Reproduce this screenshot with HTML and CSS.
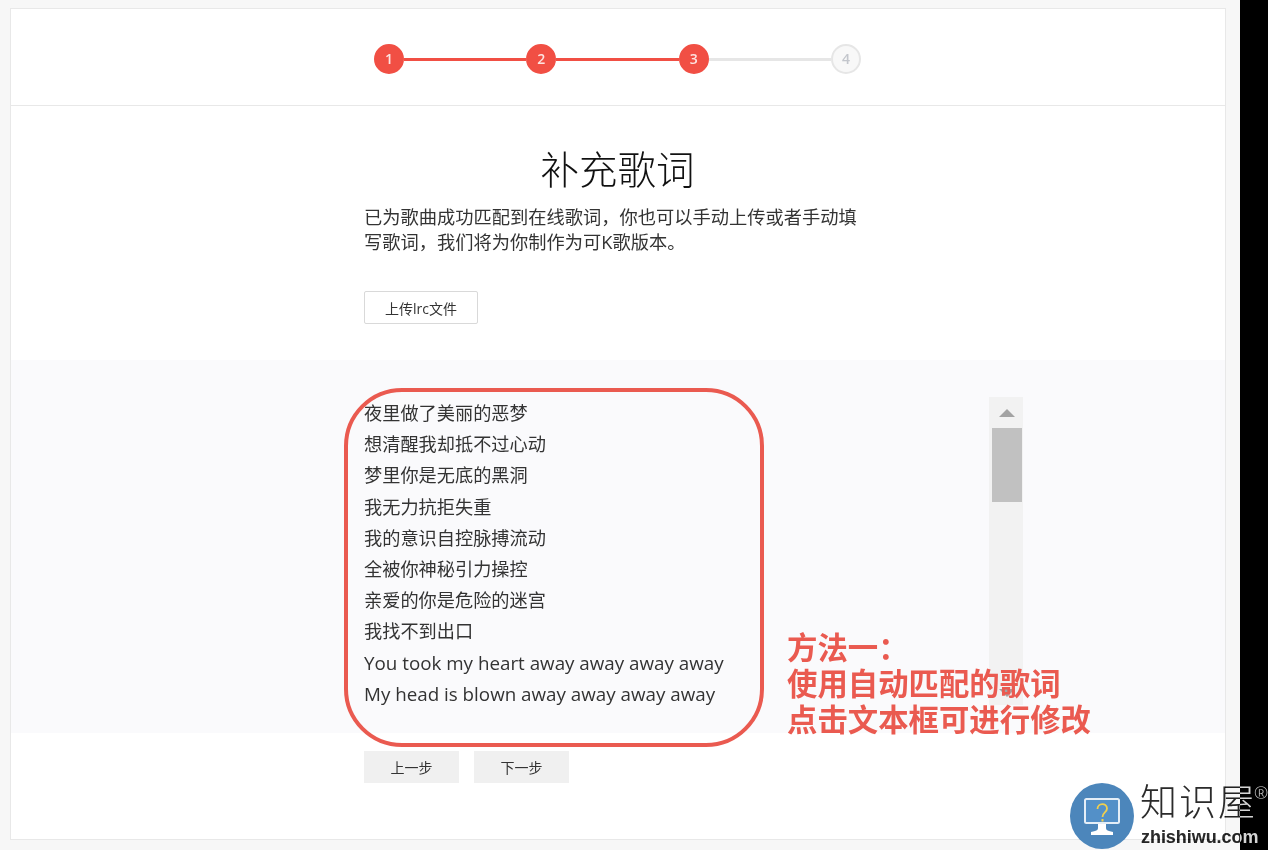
FILE: index.html
```html
<!DOCTYPE html>
<html lang="zh-CN">
<head>
    <meta charset="UTF-8">
    <meta name="viewport" content="width=device-width, initial-scale=1.0">
    <title>补充歌词</title>
    <link rel="stylesheet" href="styles.css">
</head>
<body>

    <div class="page">
        <div class="card">

            <!-- Step indicator -->
            <div class="steps-bar">
                <div class="steps">
                    <span class="dot done">1</span>
                    <span class="link done"></span>
                    <span class="dot done">2</span>
                    <span class="link done"></span>
                    <span class="dot done">3</span>
                    <span class="link"></span>
                    <span class="dot">4</span>
                </div>
            </div>

            <!-- Intro -->
            <div class="intro">
                <h1>补充歌词</h1>
                <p>已为歌曲成功匹配到在线歌词，你也可以手动上传或者手动填写歌词，我们将为你制作为可K歌版本。</p>
                <button class="upload-btn">上传lrc文件</button>
            </div>

            <!-- Lyrics editor -->
            <div class="lyrics-panel">
                <div class="lyrics">
                    <div>夜里做了美丽的恶梦</div>
                    <div>想清醒我却抵不过心动</div>
                    <div>梦里你是无底的黑洞</div>
                    <div>我无力抗拒失重</div>
                    <div>我的意识自控脉搏流动</div>
                    <div>全被你神秘引力操控</div>
                    <div>亲爱的你是危险的迷宫</div>
                    <div>我找不到出口</div>
                    <div class="latin">You took my heart away away away away</div>
                    <div class="latin">My head is blown away away away away</div>
                </div>
                <div class="scrollbar">
                    <div class="scroll-up"></div>
                    <div class="scroll-thumb"></div>
                    <div class="scroll-down"></div>
                </div>
            </div>

            <!-- Footer buttons -->
            <div class="actions">
                <button class="step-btn">上一步</button>
                <button class="step-btn">下一步</button>
            </div>
        </div>

        <!-- Annotation drawn over the screenshot -->
        <div class="callout-ring"></div>
        <div class="callout-text">方法一：<br>使用自动匹配的歌词<br>点击文本框可进行修改</div>
    </div>

    <!-- Watermark -->
    <div class="watermark">
        <svg class="wm-icon" width="64" height="66" viewBox="0 0 64 66">
            <ellipse cx="32" cy="33" rx="32" ry="33" fill="#4c86bb"/>
            <rect x="15" y="16" width="34" height="24" rx="1.500" fill="#5390c8" stroke="#e4eef7" stroke-width="2"/>
            <path d="M28 41h8v4c0 1.500 1 2.500 3 3l4 1v3H21v-3l4-1c2-.5 3-1.500 3-3z" fill="#fff"/>
            <path d="M27.500 26c0-6.500 9.500-6.500 9.500-.5 0 4-4.500 4-4.500 8.500" fill="none" stroke="#f1cf4e" stroke-width="1.800"/>
            <rect x="31.500" y="36" width="2" height="2.500" fill="#f1cf4e"/>
        </svg>
        <div class="wm-name">知识屋</div>
        <div class="wm-reg">®</div>
        <div class="wm-url">zhishiwu.com</div>
    </div>

</body>
</html>
```

FILE: styles.css
```css
/* Basic page styling */
* {
    box-sizing: border-box;
}

body {
    margin: 0;
    width: 1268px;
    height: 850px;
    overflow: hidden;
    position: relative;
    background-color: #000;
    color: #333;
    font-family: "Open Sans", "Noto Sans CJK SC", sans-serif;
}

.page {
    position: relative;
    width: 1240px;
    height: 850px;
    padding: 8px 14px 10px 10px;
    background-color: #f7f7f7;
}

.card {
    height: 100%;
    display: flex;
    flex-direction: column;
    background-color: #fff;
    border: 1px solid #e8e8e8;
}

/* Step indicator */
.steps-bar {
    height: 97px;
    flex-shrink: 0;
    padding-top: 35px;
    border-bottom: 1px solid #e8e8e8;
}

.steps {
    display: flex;
    align-items: center;
    margin-left: 363px;
    width: 487px;
}

.dot {
    width: 30px;
    height: 30px;
    flex-shrink: 0;
    border-radius: 50%;
    border: 2px solid #e6e6e6;
    background-color: #f8f8f8;
    color: #c3c6cc;
    font-size: 14px;
    font-weight: 600;
    line-height: 26px;
    text-align: center;
}

.dot.done {
    border-color: #f14f44;
    background-color: #f14f44;
    color: #fde3e0;
}

.link {
    flex: 1;
    height: 3px;
    background-color: #e6e6e6;
}

.link.done {
    background-color: #f14f44;
}

/* Intro */
.intro {
    height: 254px;
    flex-shrink: 0;
    padding: 40px 0 0 353px;
}

h1 {
    width: 507px;
    margin: 0;
    font-size: 38.500px;
    font-weight: 300;
    line-height: 46px;
    text-align: center;
    color: #111;
}

.intro p {
    width: 500px;
    margin: 12px 0 0;
    font-size: 18.250px;
    line-height: 25px;
    color: #333;
}

.upload-btn {
    display: block;
    width: 114px;
    height: 33px;
    margin-top: 37px;
    padding: 0;
    border: 1px solid #d9d9d9;
    border-radius: 2px;
    background-color: #fff;
    color: #333;
    font-family: inherit;
    font-size: 14px;
}

/* Lyrics editor */
.lyrics-panel {
    height: 373px;
    flex-shrink: 0;
    position: relative;
    display: flex;
    justify-content: space-between;
    padding: 37px 202px 0 353px;
    background-color: #fafafc;
}

.lyrics {
    padding-top: 1px;
    font-size: 18.200px;
    line-height: 31.200px;
    color: #333;
}

.latin {
    font-size: 18.800px;
}

.scrollbar {
    width: 34px;
    height: 308px;
    display: flex;
    flex-direction: column;
    background-color: #f2f2f2;
}

.scroll-up {
    height: 31px;
    position: relative;
}

.scroll-up::before {
    content: "";
    position: absolute;
    left: 10px;
    top: 12px;
    border-left: 8px solid transparent;
    border-right: 8px solid transparent;
    border-bottom: 8px solid #a3a3a3;
}

.scroll-thumb {
    width: 30px;
    height: 74px;
    margin-left: 3px;
    background-color: #c1c1c1;
}

.scroll-down {
    width: 0;
    margin: auto 0 8px 10px;
    border-left: 8px solid transparent;
    border-right: 8px solid transparent;
    border-top: 8px solid #a3a3a3;
}

/* Footer buttons */
.actions {
    display: flex;
    gap: 15px;
    padding: 18px 0 0 353px;
}

.step-btn {
    width: 95px;
    height: 32px;
    padding: 0;
    border: 0;
    background-color: #f0f0f0;
    color: #333;
    font-family: inherit;
    font-size: 14px;
}

/* Annotation */
.callout-ring {
    position: absolute;
    left: 344px;
    top: 388px;
    width: 420px;
    height: 359px;
    border: 4px solid #ea5a50;
    border-radius: 58px;
}

.callout-text {
    position: absolute;
    left: 787px;
    top: 630px;
    font-size: 30.400px;
    font-weight: 700;
    line-height: 36px;
    color: #ea5a50;
}

/* Watermark */
.watermark {
    position: absolute;
    left: 1069px;
    top: 783px;
    width: 199px;
    height: 67px;
}

.wm-icon {
    position: absolute;
    left: 1px;
    top: 0;
}

.wm-name,
.wm-reg,
.wm-url {
    position: absolute;
    mix-blend-mode: difference;
    color: #d4d4d4;
    white-space: nowrap;
}

.wm-name {
    left: 71px;
    top: -8px;
    font-family: "Noto Sans CJK SC", sans-serif;
    font-size: 37px;
    font-weight: 300;
    line-height: 50px;
    letter-spacing: 2px;
}

.wm-reg {
    left: 185px;
    top: 1px;
    font-size: 17px;
    font-weight: 300;
    line-height: 18px;
}

.wm-url {
    left: 72px;
    top: 43px;
    font-family: "Liberation Sans", sans-serif;
    font-size: 18px;
    font-weight: 700;
    line-height: 22px;
    letter-spacing: -0.050px;
}
```
